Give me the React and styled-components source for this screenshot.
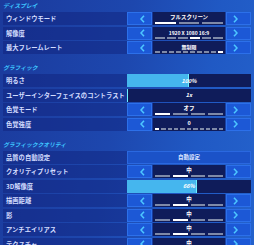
import React from 'react';
import styled, { createGlobalStyle } from 'styled-components';

const GlobalStyle = createGlobalStyle`
  html, body {
    margin: 0;
    padding: 0;
    overflow: hidden;
  }
  body {
    background: #1c45ad;
    font-family: "Noto Sans CJK JP", "Noto Sans", sans-serif;
  }
`;

const Page = styled.div`
  width: 254px;
  height: 245px;
  overflow: hidden;
  box-sizing: border-box;
  padding: 0 3px;
  background: linear-gradient(100deg, #1b3a9c 0%, #1d47ae 45%, #2059c4 75%, #2462cc 100%);
`;

const Section = styled.section`
  & + & {
    margin-top: 8px;
  }
`;

const Heading = styled.h2`
  margin: 0;
  height: 12px;
  line-height: 12px;
  font-size: 5.8px;
  font-weight: 700;
  font-style: italic;
  color: #3ec6ff;
  white-space: nowrap;
`;

const Rows = styled.div`
  display: flex;
  flex-direction: column;
  gap: 1.5px;
`;

const Row = styled.div`
  display: grid;
  grid-template-columns: 1fr 124px;
  height: 13px;
  background: rgba(16, 30, 120, 0.45);
`;

const Label = styled.div`
  padding-left: 3px;
  font-size: 6.3px;
  font-weight: 700;
  line-height: 13px;
  color: #d3ddff;
  white-space: nowrap;
  overflow: hidden;
`;

const Control = styled.div`
  display: grid;
  grid-template-columns: 25px 1fr 25px;
  gap: 1px;
  height: 13px;
`;

const ArrowButton = styled.div`
  display: flex;
  align-items: center;
  justify-content: center;
  box-sizing: border-box;
  background: #1c58d6;
  border: 1px solid #2c70ea;
  padding-left: ${(p) => (p.$side === 'left' ? '5px' : '0')};
  padding-right: ${(p) => (p.$side === 'right' ? '6px' : '0')};
`;

const ValueBox = styled.div`
  display: flex;
  flex-direction: column;
  justify-content: space-between;
  box-sizing: border-box;
  padding: 1px 2px 1px;
  background: #0f1c5a;
`;

const ValueText = styled.div`
  height: 9px;
  line-height: 9px;
  text-align: center;
  font-size: ${(p) => (p.$small ? '5px' : '5.5px')};
  font-weight: 700;
  color: #ffffff;
  white-space: nowrap;
`;

const Segments = styled.div`
  display: flex;
  gap: ${(p) => (p.$count > 4 ? '2px' : '3px')};
  height: 2px;
`;

const Segment = styled.span`
  flex: 1;
  background: ${(p) => (p.$on ? '#ffffff' : '#7f8aa8')};
`;

const SliderTrack = styled.div`
  position: relative;
  height: 13px;
  background: #0f1c5a;
  display: flex;
  align-items: center;
  justify-content: center;
`;

const SliderFill = styled.div`
  position: absolute;
  left: 0;
  top: 0;
  bottom: 0;
  background: #45b6ee;
  border-right: 1px solid #6df0ff;
`;

const SliderText = styled.span`
  position: relative;
  font-size: 5.5px;
  font-weight: 700;
  font-style: italic;
  color: #ffffff;
`;

const WideButton = styled.div`
  box-sizing: border-box;
  height: 13px;
  line-height: 11px;
  text-align: center;
  background: #1b52c8;
  border: 1px solid #2a68e0;
  font-size: 5.5px;
  font-weight: 700;
  color: #dfe8ff;
`;

const Chevron = ({ dir }) => (
  <svg width="5" height="8" viewBox="0 0 5 8">
    <polyline
      points={dir === 'left' ? '4,0.8 1,4 4,7.2' : '1,0.8 4,4 1,7.2'}
      fill="none"
      stroke="#4cc6ff"
      strokeWidth="1.6"
    />
  </svg>
);

const Selector = ({ value, count, active, small }) => (
  <Control>
    <ArrowButton $side="left">
      <Chevron dir="left" />
    </ArrowButton>
    <ValueBox>
      <ValueText $small={small}>{value}</ValueText>
      <Segments $count={count}>
        {Array.from({ length: count }).map((_, i) => (
          <Segment key={i} $on={i === active} />
        ))}
      </Segments>
    </ValueBox>
    <ArrowButton $side="right">
      <Chevron dir="right" />
    </ArrowButton>
  </Control>
);

const Slider = ({ fill, text }) => (
  <SliderTrack>
    <SliderFill style={{ width: fill }} />
    <SliderText>{text}</SliderText>
  </SliderTrack>
);

const sections = [
  {
    title: 'ディスプレイ',
    rows: [
      { label: 'ウィンドウモード', type: 'select', value: 'フルスクリーン', count: 3, active: 0 },
      { label: '解像度', type: 'select', value: '1920 X 1080 16:9', count: 6, active: 3, small: true },
      { label: '最大フレームレート', type: 'select', value: '無制限', count: 10, active: 9, small: true },
    ],
  },
  {
    title: 'グラフィック',
    rows: [
      { label: '明るさ', type: 'slider', fill: 61, value: '100%' },
      { label: 'ユーザーインターフェイスのコントラスト', type: 'slider', fill: 0, value: '1x' },
      { label: '色覚モード', type: 'select', value: 'オフ', count: 4, active: 0 },
      { label: '色覚強度', type: 'select', value: '0', count: 11, active: 0 },
    ],
  },
  {
    title: 'グラフィッククオリティ',
    rows: [
      { label: '品質の自動設定', type: 'button', value: '自動設定' },
      { label: 'クオリティプリセット', type: 'select', value: '中', count: 4, active: 1 },
      { label: '3D解像度', type: 'slider', fill: 69, value: '66%' },
      { label: '描画距離', type: 'select', value: '中', count: 4, active: 1 },
      { label: '影', type: 'select', value: '中', count: 4, active: 1 },
      { label: 'アンチエイリアス', type: 'select', value: '中', count: 4, active: 1 },
      { label: 'テクスチャ', type: 'select', value: '中', count: 4, active: 1 },
    ],
  },
];

const renderControl = (row) => {
  if (row.type === 'slider') return <Slider fill={row.fill} text={row.value} />;
  if (row.type === 'button') return <WideButton>{row.value}</WideButton>;
  return <Selector value={row.value} count={row.count} active={row.active} small={row.small} />;
};

const App = () => (
  <>
    <GlobalStyle />
    <Page>
      {sections.map((section) => (
        <Section key={section.title}>
          <Heading>{section.title}</Heading>
          <Rows>
            {section.rows.map((row) => (
              <Row key={row.label}>
                <Label>{row.label}</Label>
                {renderControl(row)}
              </Row>
            ))}
          </Rows>
        </Section>
      ))}
    </Page>
  </>
);

export default App;
